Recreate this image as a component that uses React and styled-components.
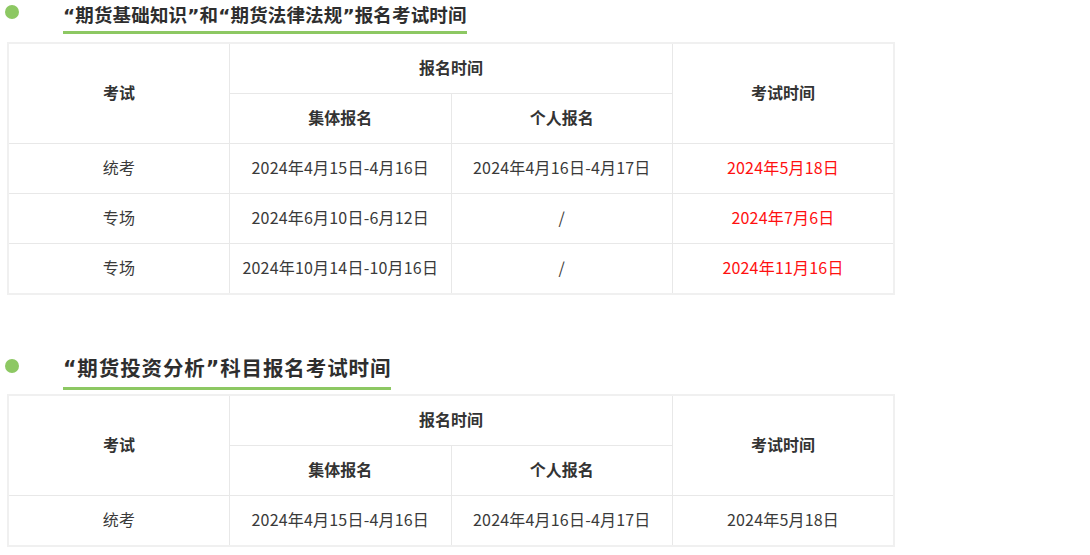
import React from "react";
import styled, { createGlobalStyle } from "styled-components";

const Global = createGlobalStyle`
  html, body { margin: 0; padding: 0; background: #fff; }
  body { font-family: "Noto Sans CJK SC", "Noto Sans", sans-serif; color: #333; }
`;

const Page = styled.div`
  padding: 0 0 0 5px;
  width: 1090px;
  box-sizing: border-box;
`;

const Section = styled.section`
  margin-top: ${(p) => p.$top || 0}px;
`;

const HeadRow = styled.div`
  display: flex;
  align-items: flex-start;
`;

const Dot = styled.span`
  width: 14px;
  height: 14px;
  border-radius: 50%;
  background: #8dc863;
  margin-top: ${(p) => p.$mt}px;
  flex: none;
`;

const Title = styled.h2`
  margin: ${(p) => p.$mt}px 0 0 44px;
  padding: 0 0 ${(p) => p.$pb}px 0;
  font-family: "DejaVu Sans", "Noto Sans CJK SC", sans-serif;
  font-size: ${(p) => p.$size}px;
  line-height: ${(p) => p.$lh}px;
  letter-spacing: ${(p) => p.$ls || 0}px;
  font-weight: 700;
  color: #2e2e2e;
  border-bottom: 3px solid #8dc863;
  white-space: nowrap;
`;

const Table = styled.table`
  margin: ${(p) => p.$mt}px 0 0 2px;
  width: 888px;
  table-layout: fixed;
  border-collapse: collapse;
  border: 2px solid #f0f0f0;
  font-size: 16px;
`;

const Th = styled.th`
  height: 46px;
  padding: 0 0 3px;
  border: 1px solid #e8e8e8;
  font-weight: 700;
  color: #333;
  text-align: center;
  vertical-align: middle;
`;

const Td = styled.td`
  height: 46px;
  padding: 0 0 3px;
  border: 1px solid #e8e8e8;
  text-align: center;
  vertical-align: middle;
  letter-spacing: 0.2px;
  color: ${(p) => (p.$red ? "#ff1010" : "#3a3a3a")};
  white-space: nowrap;
`;

const rows1 = [
  ["统考", "2024年4月15日-4月16日", "2024年4月16日-4月17日", "2024年5月18日"],
  ["专场", "2024年6月10日-6月12日", "/", "2024年7月6日"],
  ["专场", "2024年10月14日-10月16日", "/", "2024年11月16日"],
];

const rows2 = [["统考", "2024年4月15日-4月16日", "2024年4月16日-4月17日", "2024年5月18日"]];

function ExamTable({ rows, red, mt }) {
  return (
    <Table $mt={mt}>
      <thead>
        <tr>
          <Th rowSpan={2}>考试</Th>
          <Th colSpan={2}>报名时间</Th>
          <Th rowSpan={2}>考试时间</Th>
        </tr>
        <tr>
          <Th>集体报名</Th>
          <Th>个人报名</Th>
        </tr>
      </thead>
      <tbody>
        {rows.map((r, i) => (
          <tr key={i}>
            <Td>{r[0]}</Td>
            <Td>{r[1]}</Td>
            <Td>{r[2]}</Td>
            <Td $red={red}>{r[3]}</Td>
          </tr>
        ))}
      </tbody>
    </Table>
  );
}

export default function App() {
  return (
    <Page>
      <Global />
      <Section>
        <HeadRow>
          <Dot $mt={5} />
          <Title $mt={2} $pb={1} $size={18.5} $lh={28} $ls={0.15}>
            “期货基础知识”和“期货法律法规”报名考试时间
          </Title>
        </HeadRow>
        <ExamTable rows={rows1} red mt={8} />
      </Section>
      <Section $top={56}>
        <HeadRow>
          <Dot $mt={8} />
          <Title $mt={3} $pb={3} $size={20.5} $lh={30} $ls={0.9}>
            “期货投资分析”科目报名考试时间
          </Title>
        </HeadRow>
        <ExamTable rows={rows2} mt={4} />
      </Section>
    </Page>
  );
}
